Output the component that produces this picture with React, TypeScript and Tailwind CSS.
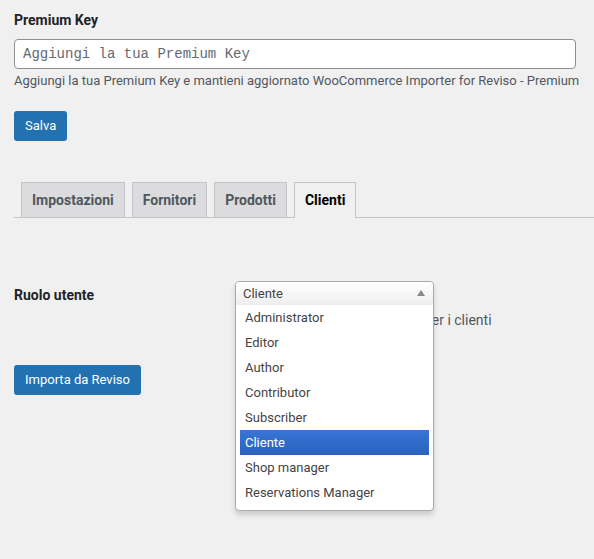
import React from 'react';

const tabs = ['Impostazioni', 'Fornitori', 'Prodotti', 'Clienti'];
const roles = [
  'Administrator',
  'Editor',
  'Author',
  'Contributor',
  'Subscriber',
  'Cliente',
  'Shop manager',
  'Reservations Manager',
];

export default function App() {
  return (
    <div className="min-h-[559px] bg-[#f0f0f1] text-[#1d2327] font-['Roboto',sans-serif] overflow-hidden">
      <div className="pl-[14px] pt-[10px]">
        <div className="text-[14px] font-bold leading-[20px]">Premium Key</div>
        <input
          type="text"
          placeholder="Aggiungi la tua Premium Key"
          className="mt-[9px] block h-[30px] w-[562px] rounded-[4px] border border-[#8c8f94] bg-white px-[8px] font-['Liberation_Mono',monospace] text-[14px] text-[#2c3338] placeholder:text-[#646970] outline-none"
        />
        <p className="mt-[3px] text-[13px] leading-[18px] text-[#50575e] whitespace-nowrap">
          Aggiungi la tua Premium Key e mantieni aggiornato WooCommerce Importer for Reviso - Premium
        </p>
        <button className="mt-[21px] h-[30px] rounded-[3px] bg-[#2271b1] px-[11px] text-[13px] text-white">
          Salva
        </button>

        <div className="mt-[41px] flex items-end gap-[7px] border-b border-[#c3c4c7] pl-[7px]">
          {tabs.map((t) => {
            const active = t === 'Clienti';
            return (
              <div
                key={t}
                className={
                  active
                    ? '-mb-px flex h-[36px] items-center border border-b-0 border-[#c3c4c7] bg-[#f0f0f1] px-[10px] text-[14px] font-bold text-black'
                    : 'flex h-[35px] items-center border border-b-0 border-[#c3c4c7] bg-[#dcdcde] px-[10px] text-[14px] font-bold text-[#50575e]'
                }
              >
                {t}
              </div>
            );
          })}
        </div>

        <div className="mt-[63px] flex">
          <div className="w-[221px] pt-[4px] text-[14px] font-bold leading-[20px]">Ruolo utente</div>
          <div className="relative">
            <div className="h-[28px] w-[198px]" />
            <p className="mt-[1px] text-[14px] leading-[20px] text-[#50575e] whitespace-nowrap">
              Seleziona il ruolo da applicare per i clienti
            </p>

            <div className="absolute left-0 top-0 z-10 w-[199px] rounded-[4px] border border-[#aaa] bg-white text-[13px] text-[#444] shadow-[0_4px_5px_rgba(0,0,0,0.15)]">
              <div className="flex h-[23px] items-center justify-between rounded-t-[4px] bg-gradient-to-b from-white to-[#eeeeee] pl-[7px] pr-[8px]">
                <span>Cliente</span>
                <svg width="8" height="6" viewBox="0 0 8 6" className="mt-[-2px]">
                  <path d="M4 0 L8 6 L0 6 Z" fill="#888" />
                </svg>
              </div>
              <ul className="px-[4px] pb-[5px]">
                {roles.map((r) => (
                  <li
                    key={r}
                    className={
                      r === 'Cliente'
                        ? 'flex h-[25px] items-center bg-gradient-to-b from-[#3875d7] to-[#2a62bc] pl-[5px] text-white'
                        : 'flex h-[25px] items-center pl-[5px] text-[#444]'
                    }
                  >
                    {r}
                  </li>
                ))}
              </ul>
            </div>
          </div>
        </div>

        <button className="mt-[35px] h-[30px] rounded-[3px] bg-[#2271b1] px-[11px] text-[13px] text-white">
          Importa da Reviso
        </button>
      </div>
    </div>
  );
}
